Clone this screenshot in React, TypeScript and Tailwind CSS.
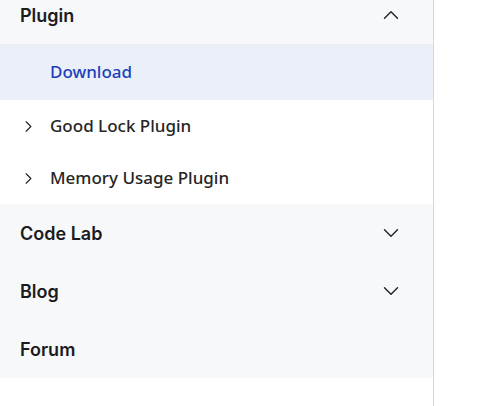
import { ChevronDown, ChevronRight, ChevronUp } from "lucide-react"

const heading = { fontFamily: "Inter, 'Noto Sans', sans-serif" }
const sub = { fontFamily: "'Noto Sans', 'Open Sans', sans-serif" }

function SectionRow({ label, open, hasChildren = true }: { label: string; open?: boolean; hasChildren?: boolean }) {
  return (
    <div className="flex h-[58px] items-center justify-between pl-5 pr-[29px]">
      <span className="text-[18px] font-semibold text-[#1b1b1f]" style={heading}>
        {label}
      </span>
      {hasChildren &&
        (open ? (
          <ChevronUp className="h-[26px] w-[26px] text-[#222]" strokeWidth={1.3} />
        ) : (
          <ChevronDown className="h-[26px] w-[26px] text-[#222]" strokeWidth={1.3} />
        ))}
    </div>
  )
}

export default function App() {
  return (
    <div className="flex h-[406px] w-[483px] overflow-hidden bg-white">
      <nav className="w-[434px] shrink-0 border-r border-[#d3d7de]">
        <div className="-mt-[14px] bg-[#f7f8fa]">
          <SectionRow label="Plugin" open />
        </div>

        <div className="flex h-[56px] items-center bg-[#ebeff7] pl-[50px]">
          <span className="text-[17px] font-medium text-[#1c3fc0]" style={sub}>
            Download
          </span>
        </div>

        {["Good Lock Plugin", "Memory Usage Plugin"].map((item) => (
          <div key={item} className="flex h-[52px] items-center gap-[12px] pl-[19px]">
            <ChevronRight className="h-[19px] w-[19px] text-[#222]" strokeWidth={1.4} />
            <span className="text-[17px] font-medium text-[#252525]" style={sub}>
              {item}
            </span>
          </div>
        ))}

        <div className="bg-[#f7f8fa]">
          <SectionRow label="Code Lab" />
          <SectionRow label="Blog" />
          <SectionRow label="Forum" hasChildren={false} />
        </div>
      </nav>
      <div className="flex-1 bg-white" />
    </div>
  )
}
